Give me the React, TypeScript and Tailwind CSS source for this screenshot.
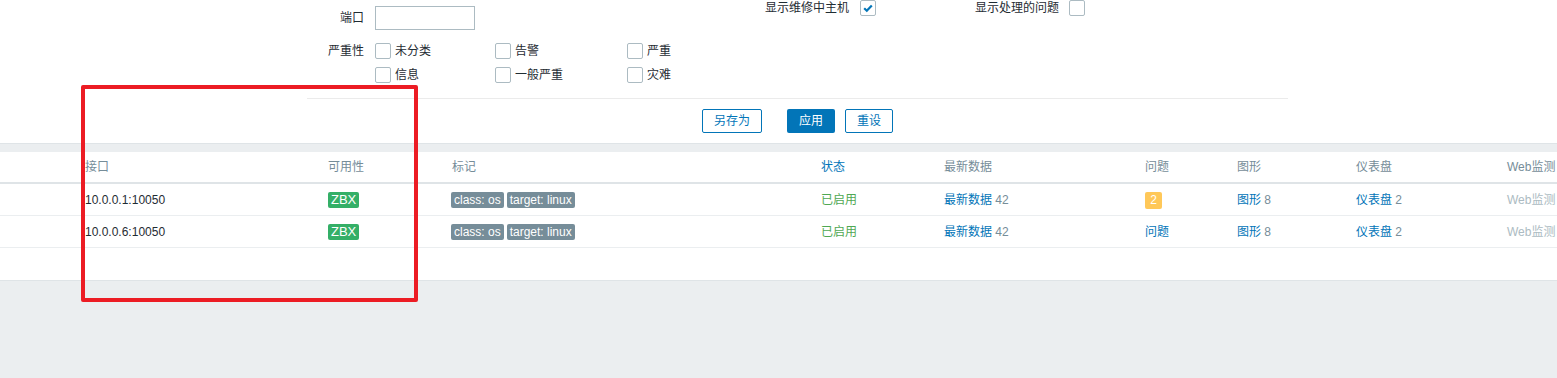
import React from "react";

const font = { fontFamily: '"Liberation Sans", Arial, "Noto Sans CJK SC", sans-serif' };

function Box({ checked = false }: { checked?: boolean }) {
  return (
    <span className="w-4 h-4 shrink-0 border border-[#acbbc2] rounded-[2px] bg-white flex items-center justify-center">
      {checked && (
        <svg width="12" height="12" viewBox="0 0 12 12">
          <path d="M2.2 6.2 L4.8 8.7 L9.8 3.4" fill="none" stroke="#0275b8" strokeWidth="2.2" />
        </svg>
      )}
    </span>
  );
}

function Check({ label, checked }: { label: string; checked?: boolean }) {
  return (
    <div className="flex items-center h-4">
      <Box checked={checked} />
      <span className="ml-1 whitespace-nowrap">{label}</span>
    </div>
  );
}

function Tag({ text }: { text: string }) {
  return <span className="bg-[#768d99] text-white rounded-[2px] px-[3px] h-4 leading-4 inline-block">{text}</span>;
}

function HostRow({ ip, problem }: { ip: string; problem: boolean }) {
  return (
    <div className="flex items-center h-[32px] border-b border-[#ebeef0]">
      <div className="w-[80px]" />
      <div className="w-[243px] pl-[5px] text-[#1f2c33]">{ip}</div>
      <div className="w-[124px] pl-[5px]">
        <span className="bg-[#34af67] text-white rounded-[2px] px-[3px] h-4 leading-4 inline-block text-[13px]">ZBX</span>
      </div>
      <div className="w-[369px] pl-[4px] flex gap-[3px]">
        <Tag text="class: os" />
        <Tag text="target: linux" />
      </div>
      <div className="w-[123px] pl-[5px] text-[#4fa853]">已启用</div>
      <div className="w-[201px] pl-[5px]">
        <span className="text-[#0275b8]">最新数据</span> <span className="text-[#768d99]">42</span>
      </div>
      <div className="w-[92px] pl-[5px]">
        {problem ? (
          <span className="bg-[#ffc859] text-white rounded-[2px] w-[17px] h-[17px] leading-[17px] inline-block text-center">2</span>
        ) : (
          <span className="text-[#0275b8]">问题</span>
        )}
      </div>
      <div className="w-[119px] pl-[5px]">
        <span className="text-[#0275b8]">图形</span> <span className="text-[#768d99]">8</span>
      </div>
      <div className="w-[156px] pl-[5px]">
        <span className="text-[#0275b8]">仪表盘</span> <span className="text-[#768d99]">2</span>
      </div>
      <div className="flex-1 text-[#acbbc2] whitespace-nowrap">Web监测</div>
    </div>
  );
}

export default function App() {
  return (
    <div className="relative w-[1557px] h-[378px] bg-[#ebeef0] text-[12px] text-[#1f2c33] overflow-hidden" style={font}>
      {/* filter */}
      <div className="bg-white h-[144px] border-b border-[#dfe4e7]">
        <div className="ml-[307px] w-[981px]">
          <div className="flex h-[98px]">
            <div className="w-[393px] shrink-0">
              <div className="flex items-center mt-[6px] h-[24px]">
                <span className="w-[57px] shrink-0 text-right">端口</span>
                <input className="ml-[11px] w-[100px] h-[24px] border border-[#acbbc2] bg-white outline-none" />
              </div>
              <div className="flex mt-[13px]">
                <span className="w-[57px] shrink-0 text-right leading-4 whitespace-nowrap">严重性</span>
                <div className="ml-[11px] grid grid-cols-[120px_132px_120px] gap-y-[8px]">
                  <Check label="未分类" />
                  <Check label="告警" />
                  <Check label="严重" />
                  <Check label="信息" />
                  <Check label="一般严重" />
                  <Check label="灾难" />
                </div>
              </div>
            </div>
            <div className="flex items-center h-4">
              <span className="w-[149px] text-right">显示维修中主机</span>
              <span className="ml-[11px]">
                <Box checked />
              </span>
              <span className="ml-[99px]">显示处理的问题</span>
              <span className="ml-[10px]">
                <Box />
              </span>
            </div>
          </div>
          <div className="border-t border-[#ebebeb] pt-[10px] flex justify-center">
            <button className="h-[24px] px-[11px] border border-[#0275b8] text-[#0275b8] rounded-[2px] bg-white mr-[25px]">另存为</button>
            <button className="h-[24px] px-[12px] bg-[#0275b8] text-white rounded-[2px]">应用</button>
            <button className="h-[24px] px-[11px] border border-[#0275b8] text-[#0275b8] rounded-[2px] bg-white ml-[10px]">重设</button>
          </div>
        </div>
      </div>

      {/* table */}
      <div className="mt-[8px] bg-white h-[129px] border-b border-[#dfe4e7]">
        <div className="flex items-center h-[32px] border-b-2 border-[#dfe4e7] text-[#768d99]">
          <div className="w-[80px]" />
          <div className="w-[243px] pl-[5px]">接口</div>
          <div className="w-[124px] pl-[5px]">可用性</div>
          <div className="w-[369px] pl-[5px]">标记</div>
          <div className="w-[123px] pl-[5px] text-[#0275b8]">状态</div>
          <div className="w-[201px] pl-[5px]">最新数据</div>
          <div className="w-[92px] pl-[5px]">问题</div>
          <div className="w-[119px] pl-[5px]">图形</div>
          <div className="w-[156px] pl-[5px]">仪表盘</div>
          <div className="flex-1 whitespace-nowrap">Web监测</div>
        </div>
        <HostRow ip="10.0.0.1:10050" problem />
        <HostRow ip="10.0.0.6:10050" problem={false} />
      </div>

      {/* red highlight overlay */}
      <div className="absolute left-[81px] top-[85px] w-[337px] h-[217px] border-4 border-[#ec1c24] rounded-[2px] pointer-events-none" />
    </div>
  );
}
